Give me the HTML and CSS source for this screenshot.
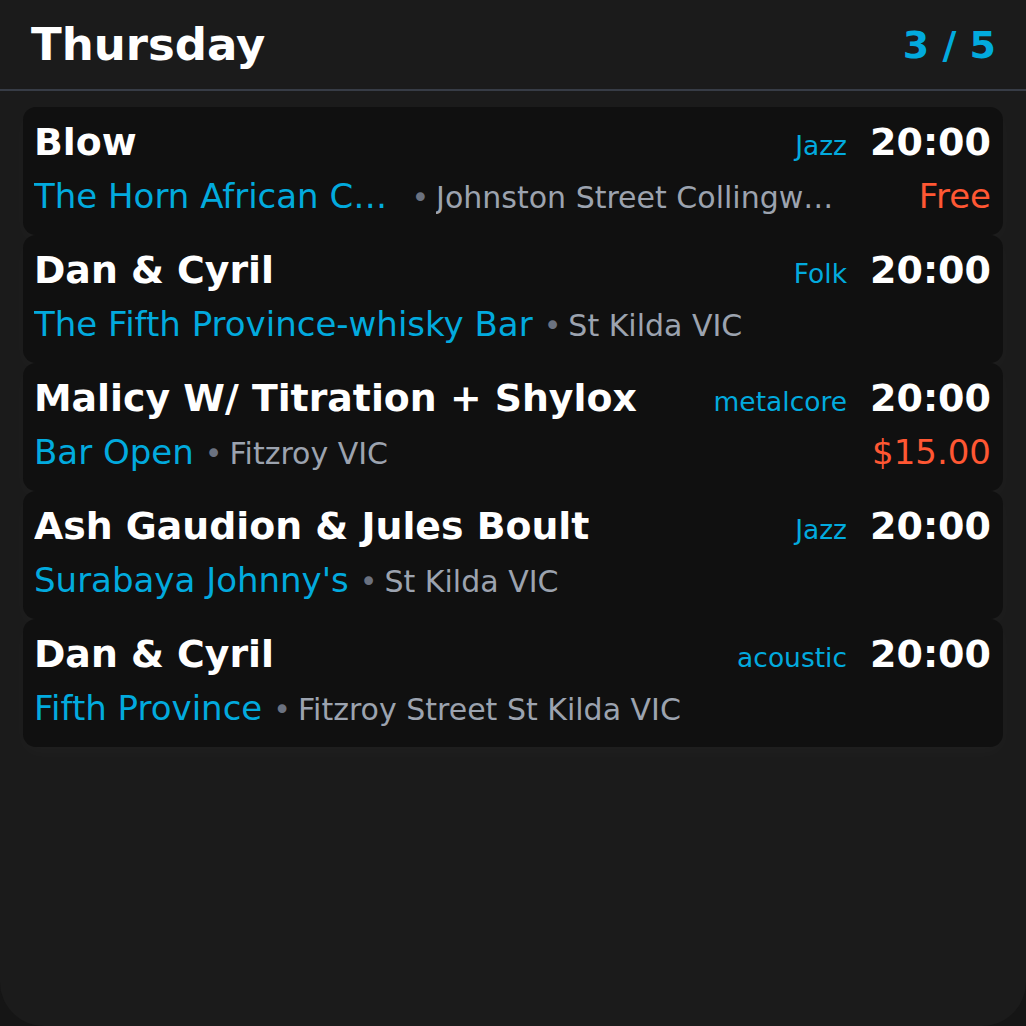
FILE: index.html
```html
<!DOCTYPE html>
<html lang="en">
<head>
<meta charset="utf-8">
<title>Thursday gigs</title>
<link rel="stylesheet" href="styles.css">
</head>
<body>
<div class="app">
  <header class="header">
    <h1 class="day">Thursday</h1>
    <div class="pager">3 / 5</div>
  </header>
  <main class="list">
    <article class="card">
      <div class="main">
        <div class="row1"><span class="title">Blow</span><span class="genre">Jazz</span></div>
        <div class="row2"><span class="venue">The Horn African Cafe</span><span class="sep">•</span><span class="addr">Johnston Street Collingwood VIC</span></div>
      </div>
      <div class="side">
        <div class="time">20:00</div>
        <div class="price">Free</div>
      </div>
    </article>
    <article class="card">
      <div class="main">
        <div class="row1"><span class="title">Dan &amp; Cyril</span><span class="genre">Folk</span></div>
        <div class="row2"><span class="venue">The Fifth Province-whisky Bar</span><span class="sep">•</span><span class="addr">St Kilda VIC</span></div>
      </div>
      <div class="side">
        <div class="time">20:00</div>
        <div class="price"></div>
      </div>
    </article>
    <article class="card">
      <div class="main">
        <div class="row1"><span class="title">Malicy W/ Titration + Shylox</span><span class="genre">metalcore</span></div>
        <div class="row2"><span class="venue">Bar Open</span><span class="sep">•</span><span class="addr">Fitzroy VIC</span></div>
      </div>
      <div class="side">
        <div class="time">20:00</div>
        <div class="price">$15.00</div>
      </div>
    </article>
    <article class="card">
      <div class="main">
        <div class="row1"><span class="title">Ash Gaudion &amp; Jules Boult</span><span class="genre">Jazz</span></div>
        <div class="row2"><span class="venue">Surabaya Johnny's</span><span class="sep">•</span><span class="addr">St Kilda VIC</span></div>
      </div>
      <div class="side">
        <div class="time">20:00</div>
        <div class="price"></div>
      </div>
    </article>
    <article class="card">
      <div class="main">
        <div class="row1"><span class="title">Dan &amp; Cyril</span><span class="genre">acoustic</span></div>
        <div class="row2"><span class="venue">Fifth Province</span><span class="sep">•</span><span class="addr">Fitzroy Street St Kilda VIC</span></div>
      </div>
      <div class="side">
        <div class="time">20:00</div>
        <div class="price"></div>
      </div>
    </article>
  </main>
</div>
</body>
</html>
```

FILE: styles.css
```css
html, body {
  margin: 0;
  padding: 0;
  background: #151515;
}
body {
  font-family: "DejaVu Sans", sans-serif;
  color: #ffffff;
}
.app {
  box-sizing: border-box;
  width: 1026px;
  height: 1026px;
  background: #1b1b1b;
  border-radius: 0 0 44px 44px;
  overflow: hidden;
}
.header {
  display: flex;
  align-items: center;
  justify-content: space-between;
  height: 89px;
  padding: 0 30px 0 31px;
  border-bottom: 2px solid #373c46;
}
.day {
  margin: 0;
  font-size: 45px;
  font-weight: 700;
  line-height: 1.164;
  position: relative;
  top: 1px;
}
.pager {
  font-size: 38px;
  font-weight: 700;
  color: #02aade;
}
.list {
  padding: 16px 23px 0 23px;
}
.card {
  display: flex;
  align-items: stretch;
  gap: 23px;
  height: 128px;
  box-sizing: border-box;
  padding: 13px 12px 0 11px;
  background: #101010;
  border-radius: 13px;
  box-shadow: 0 6px 18px rgba(255, 255, 255, 0.025);
}
.main {
  flex: 1;
  min-width: 0;
}
.row1 {
  display: flex;
  align-items: baseline;
  justify-content: space-between;
  gap: 20px;
}
.title {
  font-size: 37.8px;
  font-weight: 700;
  white-space: nowrap;
  overflow: hidden;
  text-overflow: ellipsis;
}
.genre {
  font-size: 26.5px;
  color: #02aade;
  white-space: nowrap;
}
.row2 {
  display: flex;
  align-items: baseline;
  margin-top: 12px;
  white-space: nowrap;
}
.venue {
  font-size: 34px;
  color: #02aade;
  overflow: hidden;
  text-overflow: ellipsis;
  min-width: 0;
  flex: 0 1 auto;
}
.sep {
  flex: 0 0 auto;
  font-size: 30px;
  color: #6b7280;
  margin: 0 7px 0 11px;
}
.addr {
  font-size: 30px;
  color: #9ca3af;
  overflow: hidden;
  text-overflow: ellipsis;
  min-width: 0;
  flex: 0 8.5 auto;
}
.side {
  display: flex;
  flex-direction: column;
  align-items: flex-end;
}
.time {
  font-size: 38px;
  font-weight: 700;
}
.price {
  margin-top: 12px;
  font-size: 34px;
  color: #ff5733;
}
```
